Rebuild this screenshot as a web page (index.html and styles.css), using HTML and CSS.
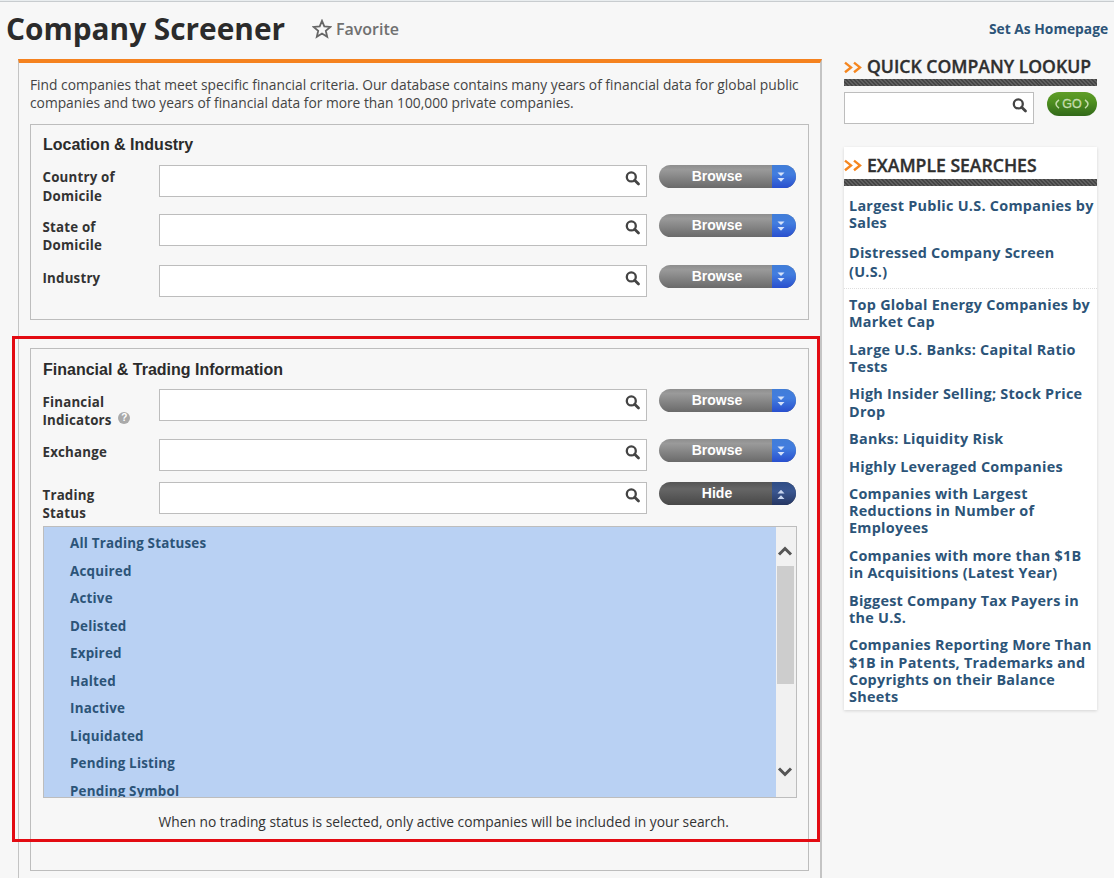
FILE: index.html
```html
<!DOCTYPE html>
<html lang="en">
<head>
<meta charset="utf-8">
<title>Company Screener</title>
<link rel="stylesheet" href="styles.css">
</head>
<body>
<svg class="defs" width="0" height="0">
  <symbol id="mag" viewBox="0 0 16 16"><circle cx="6.3" cy="5.9" r="4.5" fill="none" stroke="#444" stroke-width="2.3"/><path d="M9.7 9.3L13.5 13.1" stroke="#444" stroke-width="2.8" stroke-linecap="round"/></symbol>
  <symbol id="down" viewBox="0 0 8 11"><path d="M0.5 0.5h7L4 4zM0.5 6h7L4 9.7z" fill="#d5e2fa"/></symbol>
  <symbol id="up" viewBox="0 0 8 11"><path d="M0.5 4.5h7L4 0.8zM0.5 10h7L4 6.3z" fill="#c9d6ef"/></symbol>
  <symbol id="chev" viewBox="0 0 18 13"><path d="M1 1.6L7 6.4L1 11.2M10 1.6L16 6.4L10 11.2" fill="none" stroke="#f5861f" stroke-width="2.4"/></symbol>
</svg>
<div class="page">
  <main class="main">
    <header class="title-bar">
      <h1>Company Screener</h1>
      <a class="favorite"><svg width="20" height="20" viewBox="0 0 20 20"><path d="M10 1.8L12.3 7.4L18.4 7.9L13.8 11.8L15.2 17.8L10 14.6L4.8 17.8L6.2 11.8L1.6 7.9L7.7 7.4Z" fill="none" stroke="#666" stroke-width="1.8"/></svg><span>Favorite</span></a>
    </header>
    <div class="panel">
      <p class="intro">Find companies that meet specific financial criteria. Our database contains many years of financial data for global public<br>companies and two years of financial data for more than 100,000 private companies.</p>
      <section class="group location">
        <h2>Location &amp; Industry</h2>
        <div class="row r1"><label>Country of<br>Domicile</label><div class="field"><svg><use href="#mag"/></svg></div><button class="pill"><span>Browse</span><i><svg><use href="#down"/></svg></i></button></div>
        <div class="row r2"><label>State of<br>Domicile</label><div class="field"><svg><use href="#mag"/></svg></div><button class="pill"><span>Browse</span><i><svg><use href="#down"/></svg></i></button></div>
        <div class="row r3"><label>Industry</label><div class="field"><svg><use href="#mag"/></svg></div><button class="pill"><span>Browse</span><i><svg><use href="#down"/></svg></i></button></div>
      </section>
      <section class="group trading">
        <h2>Financial &amp; Trading Information</h2>
        <div class="row r4"><label>Financial<br>Indicators <b class="help">?</b></label><div class="field"><svg><use href="#mag"/></svg></div><button class="pill"><span>Browse</span><i><svg><use href="#down"/></svg></i></button></div>
        <div class="row r5"><label>Exchange</label><div class="field"><svg><use href="#mag"/></svg></div><button class="pill"><span>Browse</span><i><svg><use href="#down"/></svg></i></button></div>
        <div class="row r6"><label>Trading<br>Status</label><div class="field"><svg><use href="#mag"/></svg></div><button class="pill open"><span>Hide</span><i><svg><use href="#up"/></svg></i></button></div>
        <div class="listbox">
          <ul>
            <li>All Trading Statuses</li><li>Acquired</li><li>Active</li><li>Delisted</li><li>Expired</li><li>Halted</li><li>Inactive</li><li>Liquidated</li><li>Pending Listing</li><li>Pending Symbol</li>
          </ul>
          <div class="scroll">
            <svg width="16" height="12" viewBox="0 0 16 12"><path d="M2 9.5L8 3.5L14 9.5" fill="none" stroke="#555" stroke-width="3"/></svg>
            <div class="thumb"></div>
            <svg class="end" width="16" height="12" viewBox="0 0 16 12"><path d="M2 2.5L8 8.5L14 2.5" fill="none" stroke="#555" stroke-width="3"/></svg>
          </div>
        </div>
        <p class="note">When no trading status is selected, only active companies will be included in your search.</p>
      </section>
    </div>
  </main>
  <aside class="side">
    <a class="home">Set As Homepage</a>
    <h3><svg><use href="#chev"/></svg><span>QUICK COMPANY LOOKUP</span></h3>
    <div class="stripe"></div>
    <div class="lookup"><div class="field"><svg><use href="#mag"/></svg></div><button class="go"><svg width="5" height="10" viewBox="0 0 5 10"><path d="M4 .8Q1 3 1 5T4 9.2" fill="none" stroke="#c6dcae" stroke-width="1.5"/></svg><span>GO</span><svg width="5" height="10" viewBox="0 0 5 10"><path d="M1 .8Q4 3 4 5T1 9.2" fill="none" stroke="#c6dcae" stroke-width="1.5"/></svg></button></div>
    <div class="card">
      <h3><svg><use href="#chev"/></svg><span>EXAMPLE SEARCHES</span></h3>
      <div class="stripe"></div>
      <ul class="links top"><li>Largest Public U.S. Companies by<br>Sales</li><li class="loose">Distressed Company Screen<br>(U.S.)</li></ul>
      <ul class="links">
        <li>Top Global Energy Companies by<br>Market Cap</li>
        <li>Large U.S. Banks: Capital Ratio<br>Tests</li>
        <li>High Insider Selling; Stock Price<br>Drop</li>
        <li>Banks: Liquidity Risk</li>
        <li>Highly Leveraged Companies</li>
        <li>Companies with Largest<br>Reductions in Number of<br>Employees</li>
        <li>Companies with more than $1B<br>in Acquisitions (Latest Year)</li>
        <li>Biggest Company Tax Payers in<br>the U.S.</li>
        <li>Companies Reporting More Than<br>$1B in Patents, Trademarks and<br>Copyrights on their Balance<br>Sheets</li>
      </ul>
    </div>
  </aside>
  <div class="highlight"></div>
</div>
</body>
</html>
```
FILE: styles.css
```css
* { box-sizing: border-box; }
body { margin: 0; background: #f7f7f7; font-family: "Open Sans", "Noto Sans", sans-serif; color: #333; }
h1, h2, h3, p, ul { margin: 0; padding: 0; }
ul { list-style: none; }
.defs { display: block; height: 0; }
.page { position: relative; display: flex; width: 1114px; height: 878px; overflow: hidden; border-top: 1px solid #e9edef; }
.page::before { content: ""; position: absolute; top: 0; left: 0; right: 0; height: 1px; background: #c8cccf; }
.main { width: 822px; flex: none; }
.title-bar { display: flex; align-items: center; height: 58px; padding-left: 6px; white-space: nowrap; }
h1 { width: 306px; padding-bottom: 2px; font-size: 29.8px; line-height: 40px; color: #2b2b2b; }
.favorite { display: flex; align-items: center; gap: 4px; padding-bottom: 2px; font-size: 16px; font-weight: 600; color: #707070; }
.panel { width: 804px; height: 830px; margin-left: 18px; border: solid #c4c4c4; border-width: 0 2px 0 1px; border-top: 4px solid #f5821f; padding: 13px 11px 0; }
.intro { height: 48px; font-size: 13.8px; line-height: 18.3px; white-space: nowrap; color: #444; }
.group { width: 779px; border: 1px solid #bdbdbd; padding-left: 12px; }
.location { height: 196px; margin-bottom: 28px; }
.trading { height: 523px; }
h2 { height: 40px; padding-top: 10px; font: bold 16px/20px "Liberation Sans", Arial, sans-serif; color: #2b2b2b; }
.trading h2 { padding-top: 11px; }
.row { display: grid; grid-template-columns: 116px 488px 137px; align-items: start; }
.row .pill { margin-left: 12px; }
.r1 { height: 49px; }
.r2 { height: 51px; }
.r4 { height: 50px; }
.r5 { height: 43px; }
.r6 { height: 44px; }
label { padding-top: 4px; margin-left: -.5px; font-size: 13.3px; font-weight: 700; line-height: 18.3px; white-space: nowrap; letter-spacing: .2px; }
.r1 label { padding-top: 3px; line-height: 19px; }
.field { height: 32px; border: 1px solid #bdbdbd; background: #fff; display: flex; justify-content: flex-end; padding: 5px 5px 0 0; }
.field svg { width: 16px; height: 16px; }
.pill { display: flex; align-items: stretch; width: 137px; height: 23px; padding: 0; border: 0; border-radius: 12px; overflow: hidden; background: linear-gradient(#8e8e8e, #9a9a9a 20%, #6a6a6a); color: #fff; font: bold 14px/22px "Liberation Sans", Arial, sans-serif; }
.pill span { flex: 1; padding-left: 3px; text-align: center; }
.pill i { width: 24px; background: linear-gradient(#417dd8, #427ddf 40%, #294fce); display: flex; }
.pill i svg { width: 8px; height: 11px; margin: 7px 0 0 5px; }
.pill.open { background: linear-gradient(#555, #666 30%, #484848); }
.pill.open i { background: linear-gradient(#2f4d85, #3a5690 40%, #263763); }
.help { display: inline-block; width: 12px; height: 12px; margin-left: 3px; border-radius: 6px; background: #aaa; color: #fff; font: bold 10px/12px "Liberation Sans", sans-serif; text-align: center; vertical-align: 4px; margin-top: -4px; letter-spacing: 0; }
.listbox { display: flex; width: 754px; height: 272px; border: 1px solid #bdbdbd; overflow: hidden; background: #b9d1f3; }
.listbox ul { flex: 1; padding: 3px 0 0 26px; font-size: 13.4px; font-weight: 700; line-height: 27.54px; color: #2c5478; letter-spacing: .2px; }
.scroll { width: 20px; background: #f1f1f1; display: flex; flex-direction: column; align-items: flex-start; padding: 18px 0 0 1px; }
.thumb { width: 17px; height: 118px; margin-top: 9px; background: #cdcdcd; }
.scroll .end { margin-top: 82px; }
.note { padding: 14px 0 0 116px; margin-left: -.5px; font-size: 13.79px; line-height: 20px; white-space: nowrap; }
.side { width: 276px; flex: none; padding-left: 22px; white-space: nowrap; }
.home { display: block; height: 53px; padding-top: 18px; margin-left: 145px; font-size: 13.8px; font-weight: 700; line-height: 19px; color: #2c5478; }
h3 { display: flex; align-items: center; gap: 5px; height: 25px; padding-bottom: 2px; font-size: 17.6px; font-weight: 600; color: #2f2f2f; width: 254px; -webkit-text-stroke: .35px #2f2f2f; }
h3 svg { width: 18px; height: 13px; margin-top: 3px; }
.stripe { width: 253px; height: 7px; background: repeating-linear-gradient(45deg, #454545 0 1.4px, #606060 1.4px 2.8px); }
.lookup { display: flex; gap: 13px; width: 253px; margin-top: 6px; height: 55px; }
.lookup .field { width: 190px; }
.go { display: flex; justify-content: center; align-items: center; gap: 2px; width: 50px; height: 24px; padding: 0; border: 0; border-radius: 12px; background: linear-gradient(#5f9d28, #4f9020 40%, #32691a); color: #c6dcae; font: 12.5px "Liberation Sans", Arial, sans-serif; -webkit-text-stroke: .3px #c6dcae; }
.card { width: 253px; height: 563px; padding-top: 6px; background: #fff; box-shadow: 0 1px 3px rgba(0,0,0,.14); }
.card h3 { height: 26px; }
.card h3 svg { margin-top: 0; }
.links { padding: 7px 0 0 5px; font-size: 14.4px; font-weight: 700; line-height: 17.25px; color: #2c5478; letter-spacing: .27px; }
.links li { margin-bottom: 10.2px; }
.links.top { height: 103px; padding-top: 11px; border-bottom: 1px dotted #dedede; }
.links .loose { line-height: 19px; padding-top: 1px; }
.highlight { position: absolute; left: 12px; top: 335px; width: 808px; height: 506px; border: 3px solid #e30b12; }
```
